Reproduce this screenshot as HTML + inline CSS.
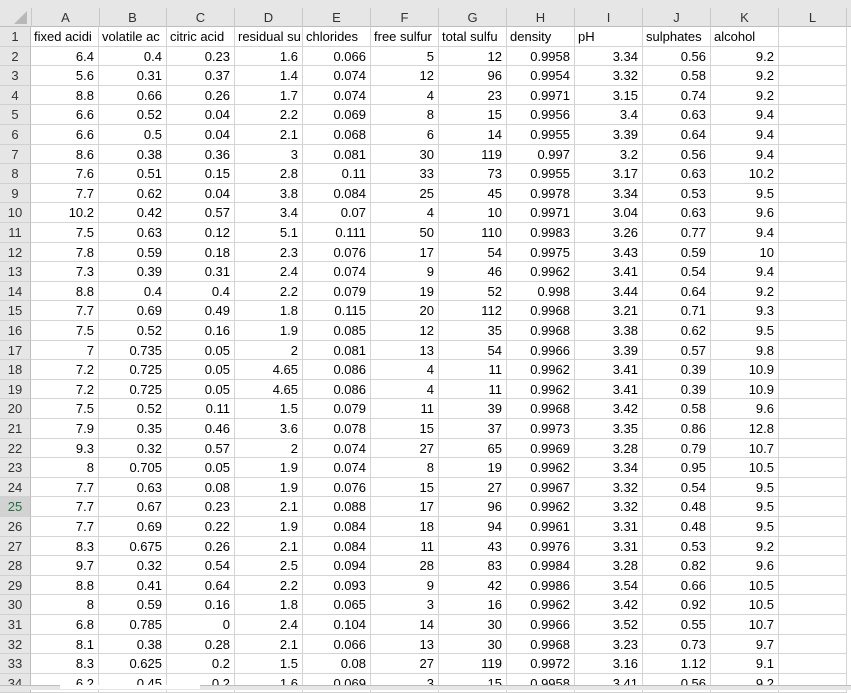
<!DOCTYPE html>
<html><head><style>
body{margin:0;width:851px;height:689px;overflow:hidden;background:#fff;font-family:"Liberation Sans",sans-serif;font-size:13px;color:#000;position:relative}
.r{position:absolute;left:0;height:19.6px;display:flex;width:851px}
.c{width:67px;border-right:1px solid #d4d4d4;border-bottom:1px solid #d4d4d4;box-sizing:content-box;height:18.6px;line-height:19px;text-align:right;padding-right:0;overflow:hidden;white-space:nowrap;flex:none}
.c span{padding-right:4px}
.h{width:30px;background:#e6e6e6;border-right:1px solid #bdbdbd;border-bottom:1px solid #d0d0d0;text-align:center;color:#333;flex:none;height:18.6px;line-height:19px;font-size:13px}
.t .c{text-align:left;padding-left:3px;width:64px}
#top{position:absolute;left:0;top:0;width:851px;height:27px;background:#e6e6e6;border-bottom:1px solid #bdbdbd;box-sizing:border-box}
#top div{position:absolute;top:8px;height:19px;line-height:19px;text-align:center;width:67px;border-right:1px solid #c8c8c8;color:#333}
</style></head><body>
<div id="top">
<svg style="position:absolute;left:14px;top:11px" width="14" height="14"><polygon points="13,0 13,13 0,13" fill="#b8b8b8"/></svg>
<div style="left:31px;border-left:1px solid #c8c8c8">A</div><div style="left:99px">B</div><div style="left:167px">C</div><div style="left:235px">D</div><div style="left:303px">E</div><div style="left:371px">F</div><div style="left:439px">G</div><div style="left:507px">H</div><div style="left:575px">I</div><div style="left:643px">J</div><div style="left:711px">K</div><div style="left:779px">L</div>
</div>
<div class="r t" style="top:27px"><div class="h">1</div><div class="c">fixed acidi</div><div class="c">volatile ac</div><div class="c">citric acid</div><div class="c">residual su</div><div class="c">chlorides</div><div class="c">free sulfur</div><div class="c">total sulfu</div><div class="c">density</div><div class="c">pH</div><div class="c">sulphates</div><div class="c">alcohol</div><div class="c"></div></div>
<div id="rows"></div>
<div class="r" style="top:46.6px"><div class="h">2</div><div class="c"><span>6.4</span></div><div class="c"><span>0.4</span></div><div class="c"><span>0.23</span></div><div class="c"><span>1.6</span></div><div class="c"><span>0.066</span></div><div class="c"><span>5</span></div><div class="c"><span>12</span></div><div class="c"><span>0.9958</span></div><div class="c"><span>3.34</span></div><div class="c"><span>0.56</span></div><div class="c"><span>9.2</span></div><div class="c"></div></div>
<div class="r" style="top:66.2px"><div class="h">3</div><div class="c"><span>5.6</span></div><div class="c"><span>0.31</span></div><div class="c"><span>0.37</span></div><div class="c"><span>1.4</span></div><div class="c"><span>0.074</span></div><div class="c"><span>12</span></div><div class="c"><span>96</span></div><div class="c"><span>0.9954</span></div><div class="c"><span>3.32</span></div><div class="c"><span>0.58</span></div><div class="c"><span>9.2</span></div><div class="c"></div></div>
<div class="r" style="top:85.8px"><div class="h">4</div><div class="c"><span>8.8</span></div><div class="c"><span>0.66</span></div><div class="c"><span>0.26</span></div><div class="c"><span>1.7</span></div><div class="c"><span>0.074</span></div><div class="c"><span>4</span></div><div class="c"><span>23</span></div><div class="c"><span>0.9971</span></div><div class="c"><span>3.15</span></div><div class="c"><span>0.74</span></div><div class="c"><span>9.2</span></div><div class="c"></div></div>
<div class="r" style="top:105.4px"><div class="h">5</div><div class="c"><span>6.6</span></div><div class="c"><span>0.52</span></div><div class="c"><span>0.04</span></div><div class="c"><span>2.2</span></div><div class="c"><span>0.069</span></div><div class="c"><span>8</span></div><div class="c"><span>15</span></div><div class="c"><span>0.9956</span></div><div class="c"><span>3.4</span></div><div class="c"><span>0.63</span></div><div class="c"><span>9.4</span></div><div class="c"></div></div>
<div class="r" style="top:125px"><div class="h">6</div><div class="c"><span>6.6</span></div><div class="c"><span>0.5</span></div><div class="c"><span>0.04</span></div><div class="c"><span>2.1</span></div><div class="c"><span>0.068</span></div><div class="c"><span>6</span></div><div class="c"><span>14</span></div><div class="c"><span>0.9955</span></div><div class="c"><span>3.39</span></div><div class="c"><span>0.64</span></div><div class="c"><span>9.4</span></div><div class="c"></div></div>
<div class="r" style="top:144.6px"><div class="h">7</div><div class="c"><span>8.6</span></div><div class="c"><span>0.38</span></div><div class="c"><span>0.36</span></div><div class="c"><span>3</span></div><div class="c"><span>0.081</span></div><div class="c"><span>30</span></div><div class="c"><span>119</span></div><div class="c"><span>0.997</span></div><div class="c"><span>3.2</span></div><div class="c"><span>0.56</span></div><div class="c"><span>9.4</span></div><div class="c"></div></div>
<div class="r" style="top:164.2px"><div class="h">8</div><div class="c"><span>7.6</span></div><div class="c"><span>0.51</span></div><div class="c"><span>0.15</span></div><div class="c"><span>2.8</span></div><div class="c"><span>0.11</span></div><div class="c"><span>33</span></div><div class="c"><span>73</span></div><div class="c"><span>0.9955</span></div><div class="c"><span>3.17</span></div><div class="c"><span>0.63</span></div><div class="c"><span>10.2</span></div><div class="c"></div></div>
<div class="r" style="top:183.8px"><div class="h">9</div><div class="c"><span>7.7</span></div><div class="c"><span>0.62</span></div><div class="c"><span>0.04</span></div><div class="c"><span>3.8</span></div><div class="c"><span>0.084</span></div><div class="c"><span>25</span></div><div class="c"><span>45</span></div><div class="c"><span>0.9978</span></div><div class="c"><span>3.34</span></div><div class="c"><span>0.53</span></div><div class="c"><span>9.5</span></div><div class="c"></div></div>
<div class="r" style="top:203.4px"><div class="h">10</div><div class="c"><span>10.2</span></div><div class="c"><span>0.42</span></div><div class="c"><span>0.57</span></div><div class="c"><span>3.4</span></div><div class="c"><span>0.07</span></div><div class="c"><span>4</span></div><div class="c"><span>10</span></div><div class="c"><span>0.9971</span></div><div class="c"><span>3.04</span></div><div class="c"><span>0.63</span></div><div class="c"><span>9.6</span></div><div class="c"></div></div>
<div class="r" style="top:223px"><div class="h">11</div><div class="c"><span>7.5</span></div><div class="c"><span>0.63</span></div><div class="c"><span>0.12</span></div><div class="c"><span>5.1</span></div><div class="c"><span>0.111</span></div><div class="c"><span>50</span></div><div class="c"><span>110</span></div><div class="c"><span>0.9983</span></div><div class="c"><span>3.26</span></div><div class="c"><span>0.77</span></div><div class="c"><span>9.4</span></div><div class="c"></div></div>
<div class="r" style="top:242.6px"><div class="h">12</div><div class="c"><span>7.8</span></div><div class="c"><span>0.59</span></div><div class="c"><span>0.18</span></div><div class="c"><span>2.3</span></div><div class="c"><span>0.076</span></div><div class="c"><span>17</span></div><div class="c"><span>54</span></div><div class="c"><span>0.9975</span></div><div class="c"><span>3.43</span></div><div class="c"><span>0.59</span></div><div class="c"><span>10</span></div><div class="c"></div></div>
<div class="r" style="top:262.2px"><div class="h">13</div><div class="c"><span>7.3</span></div><div class="c"><span>0.39</span></div><div class="c"><span>0.31</span></div><div class="c"><span>2.4</span></div><div class="c"><span>0.074</span></div><div class="c"><span>9</span></div><div class="c"><span>46</span></div><div class="c"><span>0.9962</span></div><div class="c"><span>3.41</span></div><div class="c"><span>0.54</span></div><div class="c"><span>9.4</span></div><div class="c"></div></div>
<div class="r" style="top:281.8px"><div class="h">14</div><div class="c"><span>8.8</span></div><div class="c"><span>0.4</span></div><div class="c"><span>0.4</span></div><div class="c"><span>2.2</span></div><div class="c"><span>0.079</span></div><div class="c"><span>19</span></div><div class="c"><span>52</span></div><div class="c"><span>0.998</span></div><div class="c"><span>3.44</span></div><div class="c"><span>0.64</span></div><div class="c"><span>9.2</span></div><div class="c"></div></div>
<div class="r" style="top:301.4px"><div class="h">15</div><div class="c"><span>7.7</span></div><div class="c"><span>0.69</span></div><div class="c"><span>0.49</span></div><div class="c"><span>1.8</span></div><div class="c"><span>0.115</span></div><div class="c"><span>20</span></div><div class="c"><span>112</span></div><div class="c"><span>0.9968</span></div><div class="c"><span>3.21</span></div><div class="c"><span>0.71</span></div><div class="c"><span>9.3</span></div><div class="c"></div></div>
<div class="r" style="top:321px"><div class="h">16</div><div class="c"><span>7.5</span></div><div class="c"><span>0.52</span></div><div class="c"><span>0.16</span></div><div class="c"><span>1.9</span></div><div class="c"><span>0.085</span></div><div class="c"><span>12</span></div><div class="c"><span>35</span></div><div class="c"><span>0.9968</span></div><div class="c"><span>3.38</span></div><div class="c"><span>0.62</span></div><div class="c"><span>9.5</span></div><div class="c"></div></div>
<div class="r" style="top:340.6px"><div class="h">17</div><div class="c"><span>7</span></div><div class="c"><span>0.735</span></div><div class="c"><span>0.05</span></div><div class="c"><span>2</span></div><div class="c"><span>0.081</span></div><div class="c"><span>13</span></div><div class="c"><span>54</span></div><div class="c"><span>0.9966</span></div><div class="c"><span>3.39</span></div><div class="c"><span>0.57</span></div><div class="c"><span>9.8</span></div><div class="c"></div></div>
<div class="r" style="top:360.2px"><div class="h">18</div><div class="c"><span>7.2</span></div><div class="c"><span>0.725</span></div><div class="c"><span>0.05</span></div><div class="c"><span>4.65</span></div><div class="c"><span>0.086</span></div><div class="c"><span>4</span></div><div class="c"><span>11</span></div><div class="c"><span>0.9962</span></div><div class="c"><span>3.41</span></div><div class="c"><span>0.39</span></div><div class="c"><span>10.9</span></div><div class="c"></div></div>
<div class="r" style="top:379.8px"><div class="h">19</div><div class="c"><span>7.2</span></div><div class="c"><span>0.725</span></div><div class="c"><span>0.05</span></div><div class="c"><span>4.65</span></div><div class="c"><span>0.086</span></div><div class="c"><span>4</span></div><div class="c"><span>11</span></div><div class="c"><span>0.9962</span></div><div class="c"><span>3.41</span></div><div class="c"><span>0.39</span></div><div class="c"><span>10.9</span></div><div class="c"></div></div>
<div class="r" style="top:399.4px"><div class="h">20</div><div class="c"><span>7.5</span></div><div class="c"><span>0.52</span></div><div class="c"><span>0.11</span></div><div class="c"><span>1.5</span></div><div class="c"><span>0.079</span></div><div class="c"><span>11</span></div><div class="c"><span>39</span></div><div class="c"><span>0.9968</span></div><div class="c"><span>3.42</span></div><div class="c"><span>0.58</span></div><div class="c"><span>9.6</span></div><div class="c"></div></div>
<div class="r" style="top:419px"><div class="h">21</div><div class="c"><span>7.9</span></div><div class="c"><span>0.35</span></div><div class="c"><span>0.46</span></div><div class="c"><span>3.6</span></div><div class="c"><span>0.078</span></div><div class="c"><span>15</span></div><div class="c"><span>37</span></div><div class="c"><span>0.9973</span></div><div class="c"><span>3.35</span></div><div class="c"><span>0.86</span></div><div class="c"><span>12.8</span></div><div class="c"></div></div>
<div class="r" style="top:438.6px"><div class="h">22</div><div class="c"><span>9.3</span></div><div class="c"><span>0.32</span></div><div class="c"><span>0.57</span></div><div class="c"><span>2</span></div><div class="c"><span>0.074</span></div><div class="c"><span>27</span></div><div class="c"><span>65</span></div><div class="c"><span>0.9969</span></div><div class="c"><span>3.28</span></div><div class="c"><span>0.79</span></div><div class="c"><span>10.7</span></div><div class="c"></div></div>
<div class="r" style="top:458.2px"><div class="h">23</div><div class="c"><span>8</span></div><div class="c"><span>0.705</span></div><div class="c"><span>0.05</span></div><div class="c"><span>1.9</span></div><div class="c"><span>0.074</span></div><div class="c"><span>8</span></div><div class="c"><span>19</span></div><div class="c"><span>0.9962</span></div><div class="c"><span>3.34</span></div><div class="c"><span>0.95</span></div><div class="c"><span>10.5</span></div><div class="c"></div></div>
<div class="r" style="top:477.8px"><div class="h">24</div><div class="c"><span>7.7</span></div><div class="c"><span>0.63</span></div><div class="c"><span>0.08</span></div><div class="c"><span>1.9</span></div><div class="c"><span>0.076</span></div><div class="c"><span>15</span></div><div class="c"><span>27</span></div><div class="c"><span>0.9967</span></div><div class="c"><span>3.32</span></div><div class="c"><span>0.54</span></div><div class="c"><span>9.5</span></div><div class="c"></div></div>
<div class="r" style="top:497.4px"><div class="h" style="background:#d2d2d2;color:#217346">25</div><div class="c"><span>7.7</span></div><div class="c"><span>0.67</span></div><div class="c"><span>0.23</span></div><div class="c"><span>2.1</span></div><div class="c"><span>0.088</span></div><div class="c"><span>17</span></div><div class="c"><span>96</span></div><div class="c"><span>0.9962</span></div><div class="c"><span>3.32</span></div><div class="c"><span>0.48</span></div><div class="c"><span>9.5</span></div><div class="c"></div></div>
<div class="r" style="top:517px"><div class="h">26</div><div class="c"><span>7.7</span></div><div class="c"><span>0.69</span></div><div class="c"><span>0.22</span></div><div class="c"><span>1.9</span></div><div class="c"><span>0.084</span></div><div class="c"><span>18</span></div><div class="c"><span>94</span></div><div class="c"><span>0.9961</span></div><div class="c"><span>3.31</span></div><div class="c"><span>0.48</span></div><div class="c"><span>9.5</span></div><div class="c"></div></div>
<div class="r" style="top:536.6px"><div class="h">27</div><div class="c"><span>8.3</span></div><div class="c"><span>0.675</span></div><div class="c"><span>0.26</span></div><div class="c"><span>2.1</span></div><div class="c"><span>0.084</span></div><div class="c"><span>11</span></div><div class="c"><span>43</span></div><div class="c"><span>0.9976</span></div><div class="c"><span>3.31</span></div><div class="c"><span>0.53</span></div><div class="c"><span>9.2</span></div><div class="c"></div></div>
<div class="r" style="top:556.2px"><div class="h">28</div><div class="c"><span>9.7</span></div><div class="c"><span>0.32</span></div><div class="c"><span>0.54</span></div><div class="c"><span>2.5</span></div><div class="c"><span>0.094</span></div><div class="c"><span>28</span></div><div class="c"><span>83</span></div><div class="c"><span>0.9984</span></div><div class="c"><span>3.28</span></div><div class="c"><span>0.82</span></div><div class="c"><span>9.6</span></div><div class="c"></div></div>
<div class="r" style="top:575.8px"><div class="h">29</div><div class="c"><span>8.8</span></div><div class="c"><span>0.41</span></div><div class="c"><span>0.64</span></div><div class="c"><span>2.2</span></div><div class="c"><span>0.093</span></div><div class="c"><span>9</span></div><div class="c"><span>42</span></div><div class="c"><span>0.9986</span></div><div class="c"><span>3.54</span></div><div class="c"><span>0.66</span></div><div class="c"><span>10.5</span></div><div class="c"></div></div>
<div class="r" style="top:595.4px"><div class="h">30</div><div class="c"><span>8</span></div><div class="c"><span>0.59</span></div><div class="c"><span>0.16</span></div><div class="c"><span>1.8</span></div><div class="c"><span>0.065</span></div><div class="c"><span>3</span></div><div class="c"><span>16</span></div><div class="c"><span>0.9962</span></div><div class="c"><span>3.42</span></div><div class="c"><span>0.92</span></div><div class="c"><span>10.5</span></div><div class="c"></div></div>
<div class="r" style="top:615px"><div class="h">31</div><div class="c"><span>6.8</span></div><div class="c"><span>0.785</span></div><div class="c"><span>0</span></div><div class="c"><span>2.4</span></div><div class="c"><span>0.104</span></div><div class="c"><span>14</span></div><div class="c"><span>30</span></div><div class="c"><span>0.9966</span></div><div class="c"><span>3.52</span></div><div class="c"><span>0.55</span></div><div class="c"><span>10.7</span></div><div class="c"></div></div>
<div class="r" style="top:634.6px"><div class="h">32</div><div class="c"><span>8.1</span></div><div class="c"><span>0.38</span></div><div class="c"><span>0.28</span></div><div class="c"><span>2.1</span></div><div class="c"><span>0.066</span></div><div class="c"><span>13</span></div><div class="c"><span>30</span></div><div class="c"><span>0.9968</span></div><div class="c"><span>3.23</span></div><div class="c"><span>0.73</span></div><div class="c"><span>9.7</span></div><div class="c"></div></div>
<div class="r" style="top:654.2px"><div class="h">33</div><div class="c"><span>8.3</span></div><div class="c"><span>0.625</span></div><div class="c"><span>0.2</span></div><div class="c"><span>1.5</span></div><div class="c"><span>0.08</span></div><div class="c"><span>27</span></div><div class="c"><span>119</span></div><div class="c"><span>0.9972</span></div><div class="c"><span>3.16</span></div><div class="c"><span>1.12</span></div><div class="c"><span>9.1</span></div><div class="c"></div></div>
<div class="r" style="top:673.8px"><div class="h">34</div><div class="c"><span>6.2</span></div><div class="c"><span>0.45</span></div><div class="c"><span>0.2</span></div><div class="c"><span>1.6</span></div><div class="c"><span>0.069</span></div><div class="c"><span>3</span></div><div class="c"><span>15</span></div><div class="c"><span>0.9958</span></div><div class="c"><span>3.41</span></div><div class="c"><span>0.56</span></div><div class="c"><span>9.2</span></div><div class="c"></div></div>
<div style="position:absolute;left:0;top:685px;width:851px;height:4px;background:#e6e6e6;border-top:1px solid #bdbdbd"></div>
<div style="position:absolute;left:60px;top:685px;width:140px;height:4px;background:#fff"></div>
</body></html>
